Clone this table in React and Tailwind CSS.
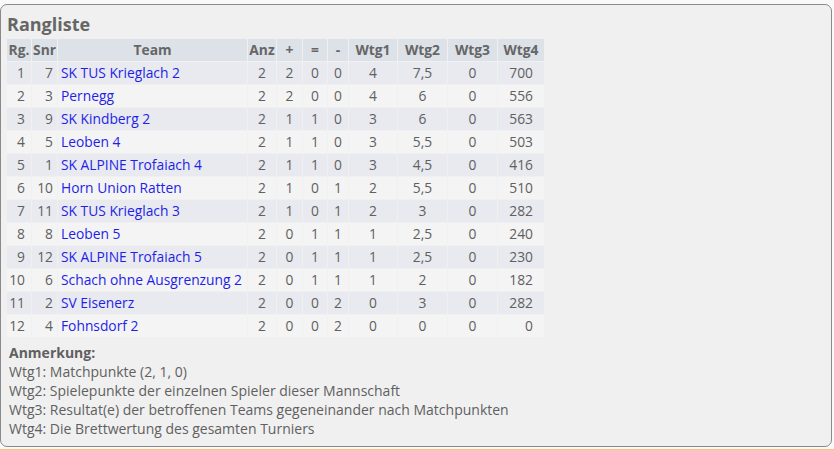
import React from 'react';

const rows = [
  [1, 7, 'SK TUS Krieglach 2', 2, 2, 0, 0, '4', '7,5', '0', '700'],
  [2, 3, 'Pernegg', 2, 2, 0, 0, '4', '6', '0', '556'],
  [3, 9, 'SK Kindberg 2', 2, 1, 1, 0, '3', '6', '0', '563'],
  [4, 5, 'Leoben 4', 2, 1, 1, 0, '3', '5,5', '0', '503'],
  [5, 1, 'SK ALPINE Trofaiach 4', 2, 1, 1, 0, '3', '4,5', '0', '416'],
  [6, 10, 'Horn Union Ratten', 2, 1, 0, 1, '2', '5,5', '0', '510'],
  [7, 11, 'SK TUS Krieglach 3', 2, 1, 0, 1, '2', '3', '0', '282'],
  [8, 8, 'Leoben 5', 2, 0, 1, 1, '1', '2,5', '0', '240'],
  [9, 12, 'SK ALPINE Trofaiach 5', 2, 0, 1, 1, '1', '2,5', '0', '230'],
  [10, 6, 'Schach ohne Ausgrenzung 2', 2, 0, 1, 1, '1', '2', '0', '182'],
  [11, 2, 'SV Eisenerz', 2, 0, 0, 2, '0', '3', '0', '282'],
  [12, 4, 'Fohnsdorf 2', 2, 0, 0, 2, '0', '0', '0', '0'],
];

const headers = ['Rg.', 'Snr', 'Team', 'Anz', '+', '=', '-', 'Wtg1', 'Wtg2', 'Wtg3', 'Wtg4'];
const widths = ['w-[24px]', 'w-[25px]', 'w-[189px]', 'w-[28px]', 'w-[25px]', 'w-[24px]', 'w-[20px]', 'w-[48px]', 'w-[49px]', 'w-[49px]', 'w-[46px]'];

export default function App() {
  return (
    <div className="w-[834px] h-[450px] bg-[#fbf8f8] pt-[4px] font-['Open_Sans',sans-serif] text-[#606060]">
      <div className="w-[832px] h-[443px] border border-[#8a8a8a] rounded-[7px] bg-[#f0f0f0] pl-[5px] pt-[7px]">
        <h2 className="text-[18px] font-bold leading-[24px] pl-[1px] text-[#666]">Rangliste</h2>
        <table className="table-fixed border-separate border-spacing-[1px] text-[13.8px] leading-[22px] mt-[2px]">
          <thead>
            <tr className="bg-[#dde1e8]">
              {headers.map((h, i) => (
                <th key={h} className={`${widths[i]} font-bold text-[#666] px-0 text-center whitespace-nowrap leading-[22px]`}>{h}</th>
              ))}
            </tr>
          </thead>
          <tbody>
            {rows.map((r, ri) => (
              <tr key={r[0]} className={ri % 2 === 0 ? 'bg-[#e8eaef]' : 'bg-[#f4f4f4]'}>
                {r.map((c, ci) => (
                  <td
                    key={ci}
                    className={
                      ci === 2
                        ? 'text-left pl-[3px] text-[#1f1fe8] whitespace-nowrap'
                        : ci === 10
                        ? 'text-right pr-[11px]'
                        : ci === 0
                        ? 'text-right pr-[6px]'
                        : ci === 1
                        ? 'text-right pr-[4px]'
                        : 'text-center'
                    }
                  >
                    {c}
                  </td>
                ))}
              </tr>
            ))}
          </tbody>
        </table>
        <div className="mt-[5px] pl-[3px] text-[14px] leading-[19px]">
          <div className="font-bold">Anmerkung:</div>
          <div>Wtg1: Matchpunkte (2, 1, 0)</div>
          <div>Wtg2: Spielepunkte der einzelnen Spieler dieser Mannschaft</div>
          <div>Wtg3: Resultat(e) der betroffenen Teams gegeneinander nach Matchpunkten</div>
          <div>Wtg4: Die Brettwertung des gesamten Turniers</div>
        </div>
      </div>
      <div className="mt-[2px] h-[1px] bg-[#f3c77d]" />
    </div>
  );
}
